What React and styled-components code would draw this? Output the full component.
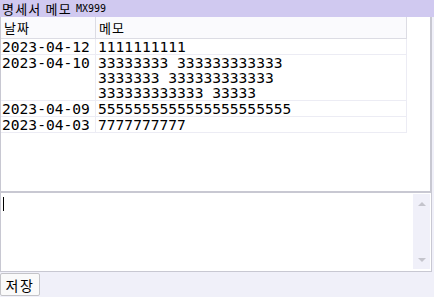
import { createGlobalStyle } from 'styled-components'
import styled from 'styled-components'

const GlobalStyle = createGlobalStyle`
    html, body {
        margin: 0;
        padding: 0;
        background: #f0f0f9;
    }
    body {
        font-family: 'DejaVu Sans Mono', 'Noto Sans CJK KR', monospace;
        color: #000;
    }
`

const memos = [
    { date: '2023-04-12', text: '1111111111' },
    {
        date: '2023-04-10',
        text: '33333333 333333333333 3333333 333333333333 333333333333 33333',
    },
    { date: '2023-04-09', text: '5555555555555555555555' },
    { date: '2023-04-03', text: '7777777777' },
]

const Page = styled.div`
    width: 434px;
    height: 297px;
    display: flex;
    flex-direction: column;
    overflow: hidden;
`

const TitleBar = styled.div`
    height: 17px;
    background: #d0c9f0;
    display: flex;
    align-items: center;
    gap: 4px;
    padding: 0 2px;
    font-family: 'Noto Sans CJK KR', sans-serif;
    font-size: 13px;
    letter-spacing: 1.2px;
    line-height: 17px;
`

const Code = styled.span`
    font-family: 'DejaVu Sans Mono', monospace;
    font-size: 10px;
    letter-spacing: 0;
`

const ListBox = styled.div`
    width: 429px;
    height: 174px;
    background: #fff;
    border-left: 1px solid #c8c8d2;
    border-right: 2px solid #c8c8d2;
    border-bottom: 2px solid #c8c8d2;
    overflow: hidden;
`

const Table = styled.table`
    width: 406px;
    border-collapse: collapse;
    font-size: 14.6px;
    line-height: 15px;
`

const HeadCell = styled.th`
    text-align: left;
    font-weight: normal;
    font-family: 'Noto Sans CJK KR', sans-serif;
    font-size: 13px;
    letter-spacing: 1px;
    background: #fafafd;
    border: 1px solid #dcdce4;
    border-top: none;
    border-left: none;
    height: 21px;
    padding: 0 3px;
    width: ${(p) => (p.$w ? `${p.$w}px` : 'auto')};
`

const Cell = styled.td`
    vertical-align: top;
    border: 1px solid #ececf4;
    border-left: none;
    padding: 0 0 0 ${(p) => (p.$first ? 1 : 2)}px;
    white-space: ${(p) => (p.$first ? 'nowrap' : 'normal')};
`

const MemoText = styled.div`
    width: 200px;
`

const EditorFrame = styled.div`
    width: 430px;
    height: 78px;
    display: flex;
    background: #fff;
    border: 1px solid #c8c8d2;
    border-top: none;
`

// the caret of the focused field is drawn as a thin line in the background
const Editor = styled.textarea`
    flex: 1;
    margin: 0;
    padding: 1px 2px;
    border: none;
    resize: none;
    overflow: hidden;
    font-family: 'Liberation Sans', sans-serif;
    font-size: 15px;
    line-height: 16px;
    outline: none;
    background: linear-gradient(#000, #000) 2px 4px / 1px 14px no-repeat, #fff;
    caret-color: #000;
`

const ScrollRail = styled.div`
    width: 17px;
    margin: 1px 1px 2px 0;
    background: #f0f0f9;
    display: flex;
    flex-direction: column;
    justify-content: space-between;
    align-items: center;
    padding: 8px 0 7px;
`

const Arrow = styled.div`
    width: 0;
    height: 0;
    border-left: 4px solid transparent;
    border-right: 4px solid transparent;
    ${(p) =>
        p.$down
            ? 'border-top: 4px solid #c4c4cc;'
            : 'border-bottom: 4px solid #c4c4cc;'}
`

const Footer = styled.div`
    display: flex;
    padding-top: 1px;
`

const SaveButton = styled.button`
    width: 40px;
    height: 23px;
    padding: 0;
    font-family: 'Noto Sans CJK KR', sans-serif;
    font-size: 14px;
    letter-spacing: 1.5px;
    background: #fafafa;
    border: 1px solid #c4c4c8;
    border-radius: 2px;
    color: #000;
`

export default function App() {
    return (
        <Page>
            <GlobalStyle />
            <TitleBar>
                <span>명세서 메모</span>
                <Code>MX999</Code>
            </TitleBar>
            <ListBox>
                <Table>
                    <thead>
                        <tr>
                            <HeadCell $w={88}>날짜</HeadCell>
                            <HeadCell>메모</HeadCell>
                        </tr>
                    </thead>
                    <tbody>
                        {memos.map((m) => (
                            <tr key={m.date}>
                                <Cell $first>{m.date}</Cell>
                                <Cell>
                                    <MemoText>{m.text}</MemoText>
                                </Cell>
                            </tr>
                        ))}
                    </tbody>
                </Table>
            </ListBox>
            <EditorFrame>
                <Editor />
                <ScrollRail>
                    <Arrow />
                    <Arrow $down />
                </ScrollRail>
            </EditorFrame>
            <Footer>
                <SaveButton>저장</SaveButton>
            </Footer>
        </Page>
    )
}
